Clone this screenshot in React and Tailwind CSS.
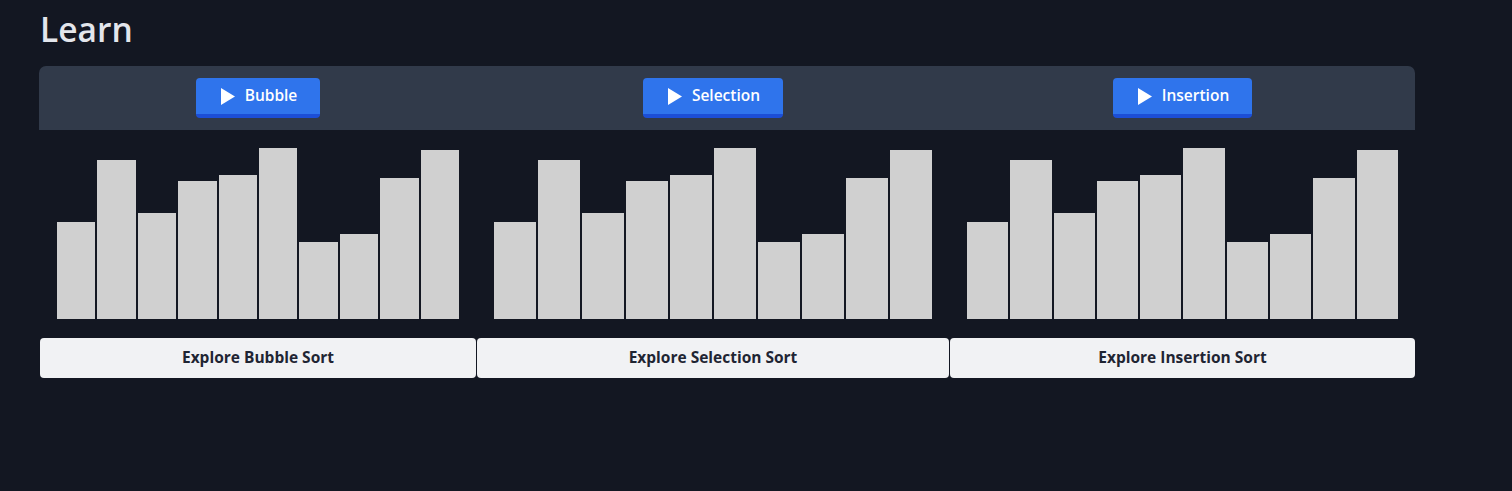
import React from 'react';

// Bar heights in px, same set for each algorithm preview
const bars = [97, 159, 106, 138, 144, 171, 77, 85, 141, 169];

const algorithms = [
    { name: 'Bubble', width: 'w-[436px]' },
    { name: 'Selection', width: 'w-[472px]' },
    { name: 'Insertion', width: 'w-[465px]' },
];

const PlayIcon = () => (
    <svg width="14" height="17" viewBox="0 0 14 17" className="shrink-0">
        <path d="M0 0 L14 8.5 L0 17 Z" fill="white" />
    </svg>
);

const App = () => {
    return (
        <div className="min-h-[491px] bg-[#131722] pl-[40px] pt-[8px]" style={{ fontFamily: '"Open Sans", "Noto Sans", sans-serif' }}>
            <h1 className="text-[33.5px] leading-[42px] font-semibold text-[#e3e6ec]">Learn</h1>

            {/* Header with play buttons */}
            <div className="mt-[16px] -ml-px w-[1376px] h-[64px] bg-[#313a4a] rounded-t-[7px] flex gap-[1px] pl-px">
                {algorithms.map((algo) => (
                    <div key={algo.name} className={`${algo.width} flex items-center justify-center`}>
                        <button className="h-[40px] pl-[25px] pr-[23px] flex items-center gap-[10px] bg-[#2f74ec] border-b-4 border-[#1c4ed6] rounded-[4px] text-white text-[15.5px] font-semibold">
                            <PlayIcon />
                            <span>{algo.name}</span>
                        </button>
                    </div>
                ))}
            </div>

            {/* Previews */}
            <div className="flex gap-[1px] w-[1375px]">
                {algorithms.map((algo) => (
                    <div key={algo.name} className={`${algo.width} flex flex-col`}>
                        <div className="h-[189px] px-[17px] flex items-end gap-[2px]">
                            {bars.map((h, idx) => (
                                <div key={idx} className="flex-1 bg-[#d0d0d0]" style={{ height: `${h}px` }} />
                            ))}
                        </div>
                        <button className="mt-[19px] h-[40px] w-full rounded-[4px] bg-[#f1f2f4] text-[#1f2533] text-[15.5px] font-bold">
                            Explore {algo.name} Sort
                        </button>
                    </div>
                ))}
            </div>
        </div>
    );
};

export default App;
